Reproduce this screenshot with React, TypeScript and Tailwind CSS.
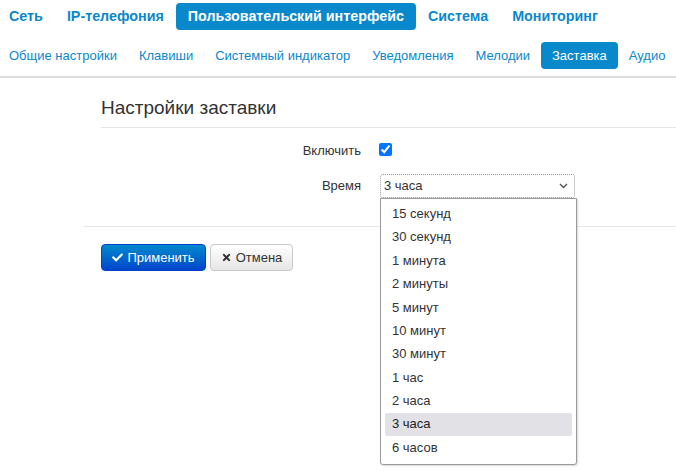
import React from 'react';
import { FaCheck, FaTimes } from 'react-icons/fa';

const topNav = ['Сеть', 'IP-телефония', 'Пользовательский интерфейс', 'Система', 'Мониторинг'];
const subNav = ['Общие настройки', 'Клавиши', 'Системный индикатор', 'Уведомления', 'Мелодии', 'Заставка', 'Аудио'];
const options = ['15 секунд', '30 секунд', '1 минута', '2 минуты', '5 минут', '10 минут', '30 минут', '1 час', '2 часа', '3 часа', '6 часов'];

const App: React.FC = () => {
  return (
    <div
      className="relative w-[676px] h-[471px] overflow-hidden bg-white text-[#333]"
      style={{ fontFamily: '"Liberation Sans", Arial, sans-serif' }}
    >
      {/* Top menu */}
      <div className="flex pt-[3px] ml-[-3px] whitespace-nowrap">
        {topNav.map((item) => (
          <div
            key={item}
            className={
              item === 'Пользовательский интерфейс'
                ? 'h-[27px] px-[12px] flex items-center rounded-[4px] bg-[#0a88cc] text-white text-[14.3px] font-bold'
                : 'h-[27px] px-[12px] flex items-center text-[#0a88cc] text-[14.3px] font-bold'
            }
          >
            {item}
          </div>
        ))}
      </div>

      {/* Sub menu */}
      <div className="flex mt-[12px] ml-[-2px] whitespace-nowrap">
        {subNav.map((item) => (
          <div
            key={item}
            className={
              item === 'Заставка'
                ? 'h-[27px] px-[11px] flex items-center rounded-[4px] bg-[#0a88cc] text-white text-[13px]'
                : 'h-[27px] px-[11px] flex items-center text-[#0a88cc] text-[13px]'
            }
          >
            {item}
          </div>
        ))}
      </div>
      <div className="mt-[7px] h-[2px] bg-[#ddd]" />

      {/* Content */}
      <div className="ml-[84px]">
        <div className="ml-[17px] mt-[19px] pb-[8px] border-b border-[#e5e5e5]">
          <h2 className="text-[19px] leading-[22px] text-[#333]">Настройки заставки</h2>
        </div>

        <div className="pt-[14px] pb-[28px] border-b border-[#e5e5e5]">
          <div className="flex items-center h-[14px]">
            <div className="w-[277px] text-right text-[13px] translate-y-[2px]">Включить</div>
            <div className="ml-[18px] flex items-center">
              <input type="checkbox" checked readOnly className="w-[13px] h-[13px] m-0 accent-[#0075ff]" />
            </div>
          </div>
          <div className="flex items-center mt-[18px] h-[24px]">
            <div className="w-[277px] text-right text-[13px]">Время</div>
            <div className="ml-[19px] w-[195px] h-[24px] flex items-center justify-between pl-[3px] pr-[5px] border border-dotted border-[#999] rounded-[3px] text-[13px] text-[#333]">
              <span>3 часа</span>
              <svg width="9" height="6" viewBox="0 0 9 6" className="mr-[1px]">
                <path d="M1 1l3.5 3.5L8 1" fill="none" stroke="#555" strokeWidth="1.4" />
              </svg>
            </div>
          </div>
        </div>

        <div className="flex gap-[4px] ml-[17px] mt-[17px]">
          <button className="h-[27px] w-[105px] flex items-center justify-center gap-[4px] rounded-[4px] border border-[#0044cc] bg-gradient-to-b from-[#0088cc] to-[#0044cc] text-white text-[13px]">
            <FaCheck className="w-[11px] h-[11px]" />
            Применить
          </button>
          <button className="h-[27px] w-[83px] flex items-center justify-center gap-[4px] rounded-[4px] border border-[#c8c8c8] bg-gradient-to-b from-white to-[#e6e6e6] text-[#333] text-[13px]">
            <FaTimes className="w-[11px] h-[11px]" />
            Отмена
          </button>
        </div>
      </div>

      {/* Open dropdown */}
      <div className="absolute left-[380px] top-[198px] w-[197px] h-[267px] bg-white border border-[#9a9a9a] rounded-b-[3px] shadow-[1px_1px_2px_rgba(0,0,0,0.15)] px-[4px] py-[3px]">
        {options.map((o) => (
          <div
            key={o}
            className={
              o === '3 часа'
                ? 'h-[23.4px] flex items-center pl-[7px] text-[13px] text-[#222] bg-[#e1e1e6] rounded-[2px]'
                : 'h-[23.4px] flex items-center pl-[7px] text-[13px] text-[#333]'
            }
          >
            {o}
          </div>
        ))}
      </div>
    </div>
  );
};

export default App;
